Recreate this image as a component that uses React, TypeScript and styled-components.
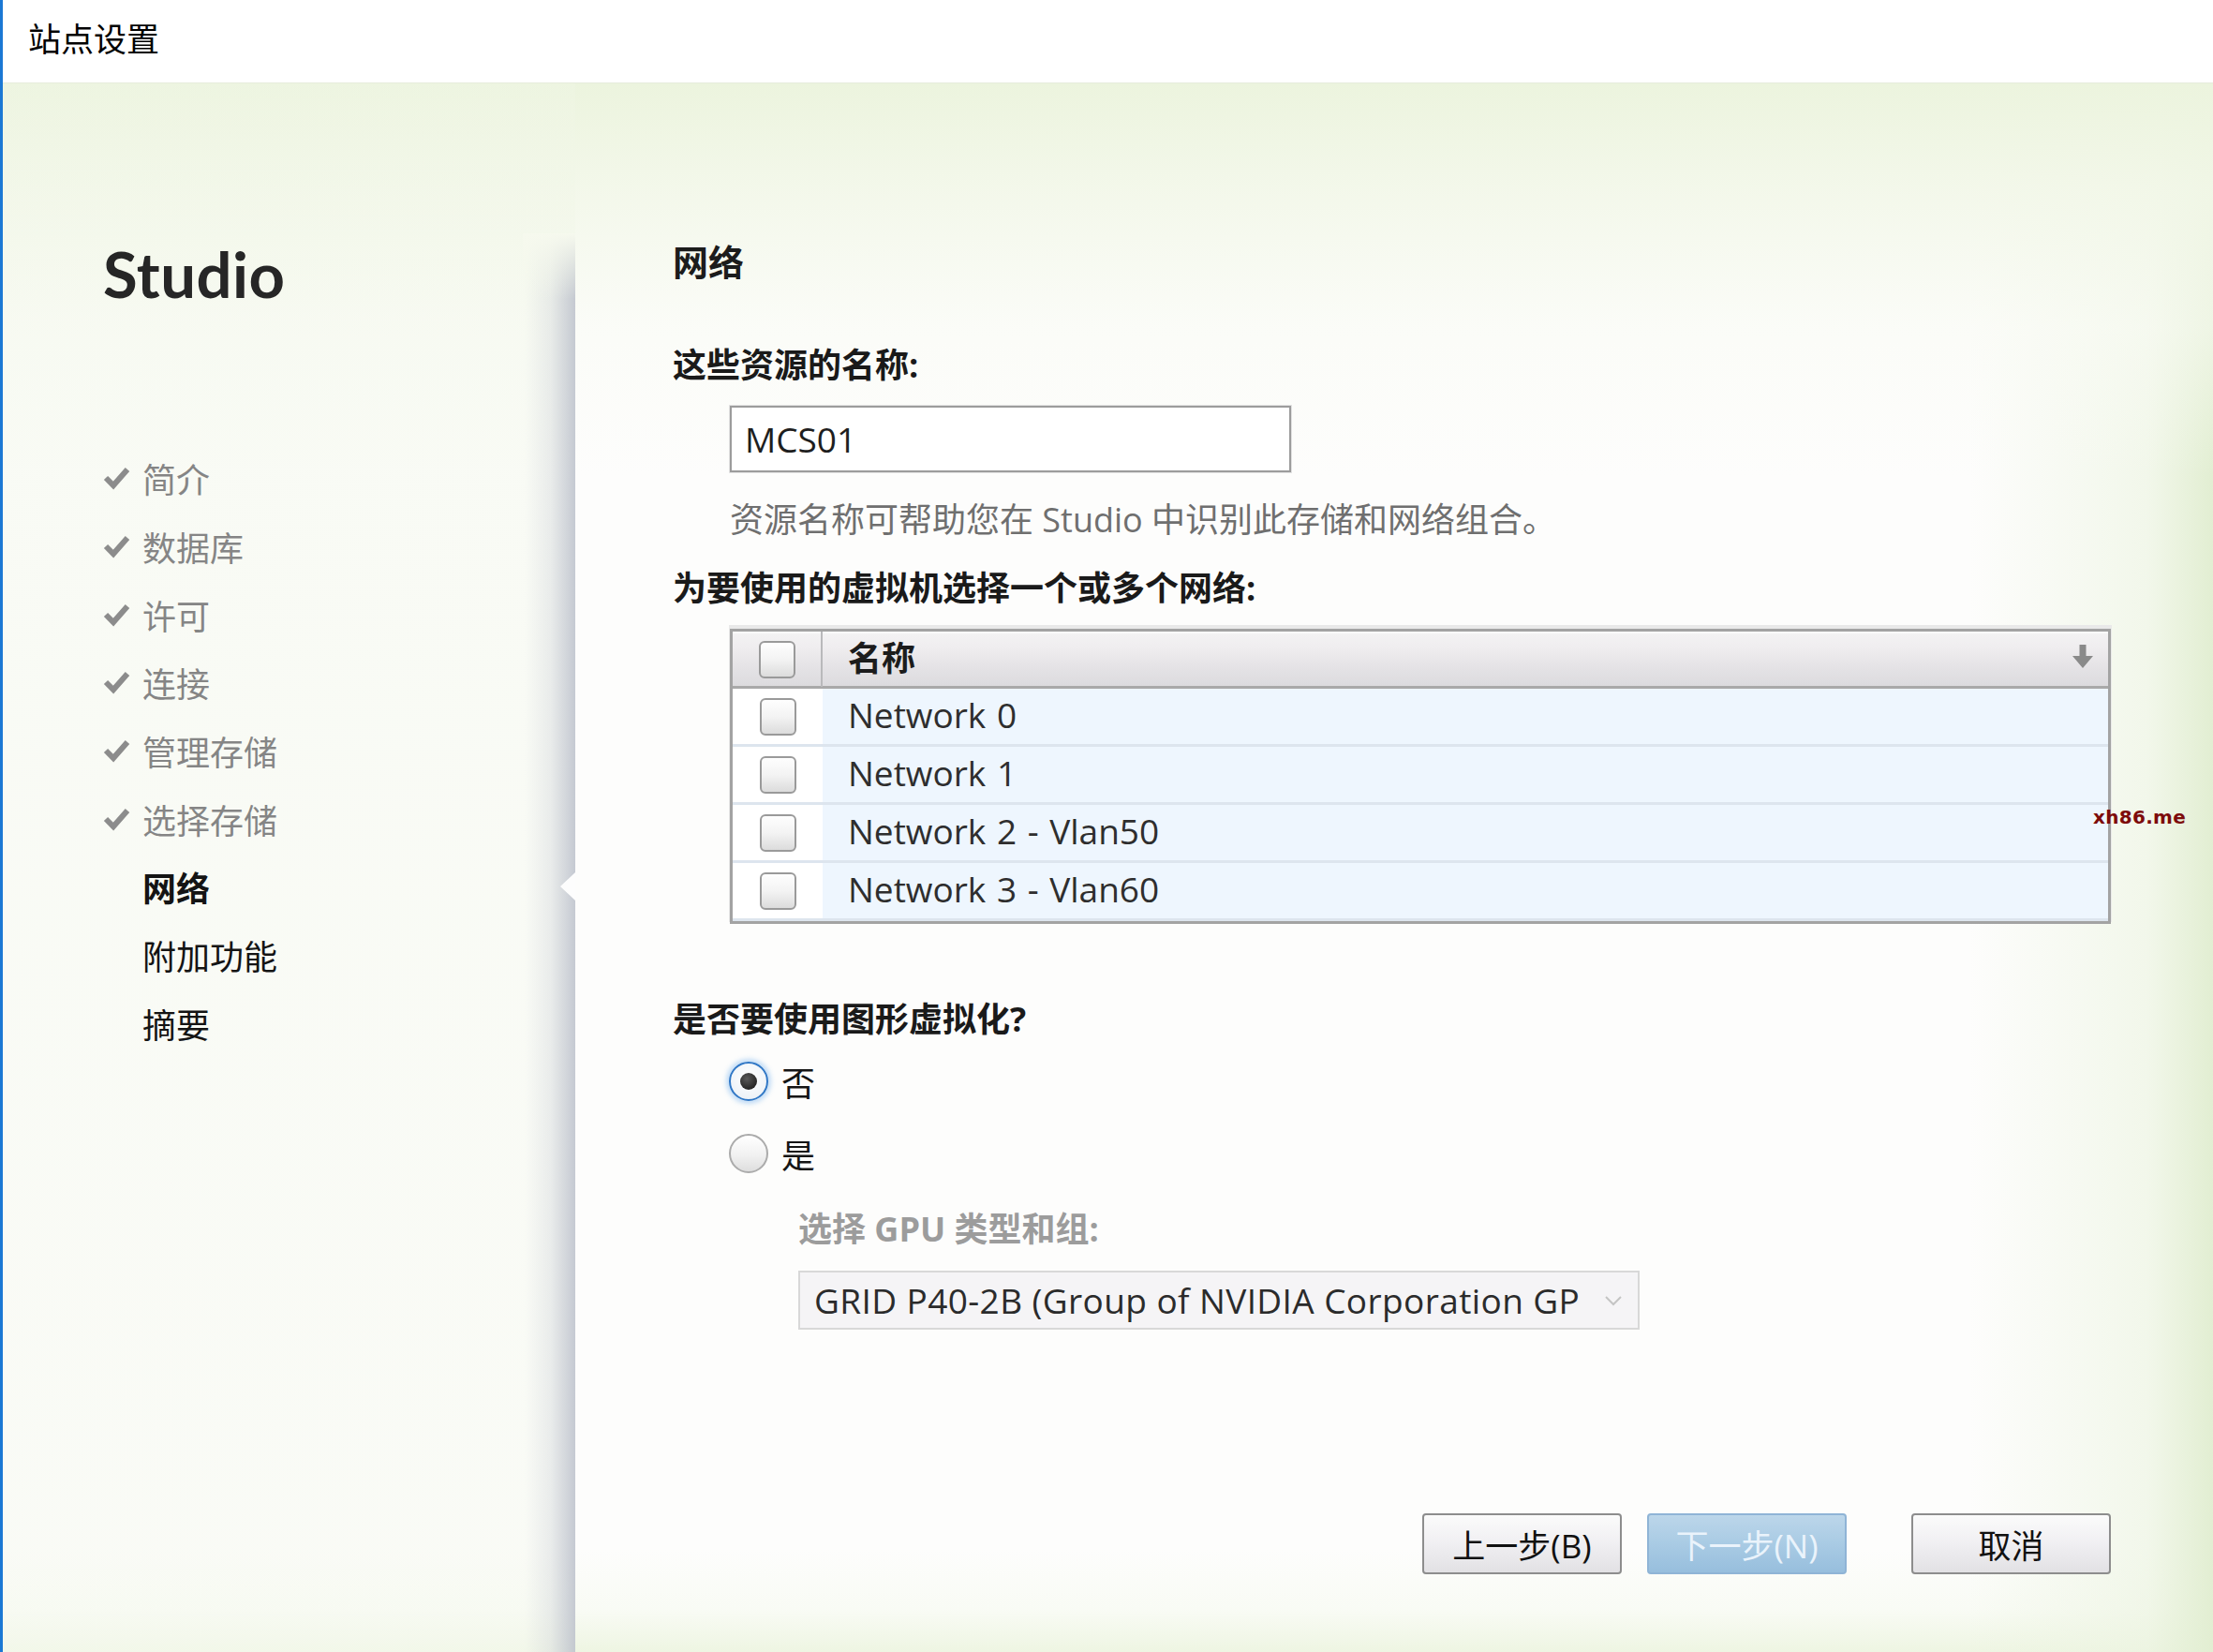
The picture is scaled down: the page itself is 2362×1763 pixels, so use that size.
import React from "react";
import styled, { createGlobalStyle, css } from "styled-components";

const GlobalStyle = createGlobalStyle`
  html, body { margin: 0; padding: 0; background: #ffffff; }
  body { font-family: "Open Sans", "Noto Sans CJK SC", sans-serif; }
  * { box-sizing: border-box; }
`;

const CJK = `"Noto Sans CJK SC", sans-serif`;
const LATIN = `"Open Sans", "Noto Sans CJK SC", sans-serif`;

const Window = styled.div`
  position: relative;
  width: 2362px;
  height: 1763px;
  border-left: 3px solid #1b78d4;
  display: flex;
  flex-direction: column;
  overflow: hidden;
`;

const TitleBar = styled.div`
  height: 88px;
  flex: none;
  background: #ffffff;
  padding: 0 0 10px 27px;
  display: flex;
  align-items: center;
`;

const TitleText = styled.span`
  font-family: ${CJK};
  font-size: 35px;
  color: #000;
  line-height: 1;
`;

const Body = styled.div`
  flex: 1;
  display: flex;
  border-top: 1px solid #e6ecdc;
  background:
    linear-gradient(to bottom, rgba(236,244,222,1) 0, rgba(242,247,232,0.9) 110px, rgba(249,251,244,0.55) 260px, rgba(255,255,255,0) 420px),
    linear-gradient(to left, rgba(226,238,210,1) 0, rgba(236,244,225,0.65) 70px, rgba(255,255,255,0) 260px),
    linear-gradient(to top, rgba(238,245,226,1) 0, rgba(246,250,240,0.6) 45px, rgba(255,255,255,0) 110px),
    #fdfdfc;
`;

const Sidebar = styled.div`
  width: 611px;
  flex: none;
  padding: 163px 0 0 107px;
  background:
    linear-gradient(to bottom, rgba(246,249,238,1) 0, rgba(246,249,238,0) 100%) right 0 top 160px / 56px 70px no-repeat,
    linear-gradient(to right, rgba(196,200,210,0) 0, rgba(196,200,210,0.3) 28px, rgba(184,189,201,0.8) 100%) right bottom / 54px calc(100% - 160px) no-repeat,
    linear-gradient(to bottom, rgba(240,246,230,0.35), rgba(246,249,240,0.5));
`;

const Brand = styled.div`
  font-family: Lato, "Open Sans", sans-serif;
  font-weight: 700;
  font-size: 67px;
  line-height: 80px;
  color: #262626;
  letter-spacing: 0.5px;
`;

const NavList = styled.ul`
  list-style: none;
  margin: 142px 0 0 0;
  padding: 0;
`;

type StepState = "done" | "current" | "todo";

const NavItem = styled.li<{ $state: StepState }>`
  display: flex;
  align-items: center;
  height: 72.7px;
  font-family: ${CJK};
  font-size: 36px;
  color: ${(p) => (p.$state === "done" ? "#858585" : "#141414")};
  font-weight: ${(p) => (p.$state === "current" ? 700 : 400)};
`;

const CheckSlot = styled.span`
  width: 29px;
  height: 26px;
  margin-right: 13px;
  display: inline-flex;
  align-items: center;
`;

const Content = styled.div`
  position: relative;
  flex: 1;
  padding: 164px 0 0 104px;
  display: flex;
  flex-direction: column;
  align-items: flex-start;
`;

const Notch = styled.span`
  position: absolute;
  left: -16px;
  top: 842px;
  width: 0;
  height: 0;
  border-top: 15px solid transparent;
  border-bottom: 15px solid transparent;
  border-right: 16px solid #fdfdfd;
`;

const Heading = styled.h1`
  margin: 0;
  font-family: ${CJK};
  font-size: 38px;
  font-weight: 700;
  line-height: 50px;
  color: #1c1c1c;
`;

const Label = styled.div<{ $mt: number; $indent?: number; $muted?: boolean }>`
  margin-top: ${(p) => p.$mt}px;
  margin-left: ${(p) => p.$indent ?? 0}px;
  font-family: ${LATIN};
  font-size: 36px;
  font-weight: 700;
  line-height: 50px;
  color: ${(p) => (p.$muted ? "#9c9c9c" : "#1a1a1a")};
  white-space: nowrap;
`;

const InputBox = styled.div`
  margin: 18px 0 0 61px;
  width: 599px;
  height: 71px;
  border: 2px solid #9c9c9c;
  box-shadow: 0 0 0 1px #e2e2e2;
  background: #ffffff;
  padding-left: 14px;
  display: flex;
  align-items: center;
  font-family: ${LATIN};
  font-size: 37px;
  color: #1e1e1e;
`;

const Helper = styled.div`
  margin: 26px 0 0 61px;
  font-family: ${LATIN};
  font-size: 36px;
  line-height: 50px;
  color: #6f6f6f;
  white-space: nowrap;
`;

const Table = styled.div`
  margin: 18px 0 0 61px;
  width: 1474px;
  border: 3px solid #a3a3a3;
  box-shadow: 0 -3px 0 1px #e9e9e9;
  background: #ffffff;
`;

const rowGrid = css`
  display: grid;
  grid-template-columns: 96px 1fr;
`;

const HeaderRow = styled.div`
  ${rowGrid};
  height: 61px;
  border-bottom: 3px solid #a9a9a9;
  background: linear-gradient(to bottom, #f4f3f4 0, #efedef 30%, #e6e4e7 60%, #dcdbde 100%);
  box-shadow: inset 0 2px 0 #fbfbfb;
`;

const Row = styled.div`
  ${rowGrid};
  height: 62px;
  border-bottom: 3px solid #dde5ee;
`;

const CheckCell = styled.div<{ $header?: boolean }>`
  display: flex;
  align-items: center;
  justify-content: center;
  background: ${(p) => (p.$header ? "transparent" : "#ffffff")};
  border-right: ${(p) => (p.$header ? "2px solid #b9b9bb" : "none")};
`;

const Checkbox = styled.span`
  width: 39px;
  height: 40px;
  border: 2px solid #9a9a9a;
  border-radius: 6px;
  background: linear-gradient(to bottom, #fefefe 0, #f3f3f3 50%, #dcdcdc 100%);
`;

const NameCell = styled.div<{ $header?: boolean }>`
  display: flex;
  align-items: center;
  padding: 0 16px ${(p) => (p.$header ? 6 : 4)}px 27px;
  background: ${(p) => (p.$header ? "transparent" : "#eef6fe")};
  font-family: ${LATIN};
  font-size: ${(p) => (p.$header ? 36 : 37)}px;
  font-weight: ${(p) => (p.$header ? 700 : 400)};
  color: ${(p) => (p.$header ? "#1c1c1c" : "#2e2e2e")};
  white-space: nowrap;
  word-spacing: 2px;
`;

const SortIcon = styled.svg`
  margin-left: auto;
  flex: none;
`;

const RadioRow = styled.label<{ $mt: number }>`
  margin: ${(p) => p.$mt}px 0 0 60px;
  height: 60px;
  display: flex;
  align-items: center;
  gap: 14px;
  font-family: ${CJK};
  font-size: 36px;
  color: #151515;
`;

const RadioDot = styled.span<{ $checked?: boolean }>`
  position: relative;
  width: 42px;
  height: 42px;
  border-radius: 50%;
  ${(p) =>
    p.$checked
      ? css`
          border: 2px solid #2f77c6;
          background: radial-gradient(circle at 50% 40%, #ffffff 0, #eef3f8 70%, #dfe7ef 100%);
          box-shadow: 0 0 5px 3px rgba(120, 180, 240, 0.45);
          &::after {
            content: "";
            position: absolute;
            left: 50%;
            top: 50%;
            width: 18px;
            height: 18px;
            margin: -9px 0 0 -9px;
            border-radius: 50%;
            background: radial-gradient(circle at 40% 35%, #5a5a5a 0, #262626 70%);
          }
        `
      : css`
          border: 2px solid #ababab;
          background: linear-gradient(to bottom, #ffffff 0, #f1f1f1 55%, #dedede 100%);
        `}
`;

const Select = styled.div`
  margin: 19px 0 0 134px;
  width: 898px;
  height: 63px;
  border: 2px solid #d8d8d8;
  background: #f5f4f6;
  padding: 0 16px 0 15px;
  display: flex;
  align-items: center;
  gap: 20px;
  font-family: ${LATIN};
  font-size: 37px;
  letter-spacing: 0.4px;
  color: #2b2b2b;
`;

const SelectText = styled.span`
  flex: 1;
  min-width: 0;
  overflow: hidden;
  white-space: nowrap;
`;

const ButtonBar = styled.div`
  margin: 196px 0 0 61px;
  width: 1474px;
  display: flex;
  justify-content: flex-end;
`;

const WizardButton = styled.button<{ $primary?: boolean; $gapLeft?: number }>`
  width: 213px;
  height: 65px;
  margin-left: ${(p) => p.$gapLeft ?? 0}px;
  border-radius: 4px;
  font-family: ${LATIN};
  font-size: 35px;
  padding: 0;
  ${(p) =>
    p.$primary
      ? css`
          border: 2px solid #8fb4d6;
          background: linear-gradient(to bottom, #bcd6ea 0, #a9cbe4 50%, #97bedd 100%);
          color: #eaf3fb;
        `
      : css`
          border: 2px solid #8d8d8d;
          background: linear-gradient(to bottom, #fbfbfb 0, #f0eff2 50%, #e2e1e4 100%);
          color: #111111;
        `}
`;

const Watermark = styled.span`
  position: absolute;
  left: 2231px;
  top: 860px;
  font-family: "DejaVu Sans", sans-serif;
  font-weight: 700;
  font-size: 20px;
  color: #7d0b0b;
  letter-spacing: 0.3px;
`;

const CheckMark = () => (
  <svg width="29" height="26" viewBox="0 0 29 26">
    <path d="M3 13 L11 21 L26 4" fill="none" stroke="#8c8c8c" strokeWidth="6" strokeLinejoin="miter" />
  </svg>
);

const steps: { label: string; state: StepState }[] = [
  { label: "简介", state: "done" },
  { label: "数据库", state: "done" },
  { label: "许可", state: "done" },
  { label: "连接", state: "done" },
  { label: "管理存储", state: "done" },
  { label: "选择存储", state: "done" },
  { label: "网络", state: "current" },
  { label: "附加功能", state: "todo" },
  { label: "摘要", state: "todo" },
];

const networks = ["Network 0", "Network 1", "Network 2 - Vlan50", "Network 3 - Vlan60"];

export default function App() {
  return (
    <>
      <GlobalStyle />
      <Window>
        <TitleBar>
          <TitleText>站点设置</TitleText>
        </TitleBar>
        <Body>
          <Sidebar>
            <Brand>Studio</Brand>
            <NavList>
              {steps.map((s) => (
                <NavItem key={s.label} $state={s.state}>
                  <CheckSlot>{s.state === "done" && <CheckMark />}</CheckSlot>
                  {s.label}
                </NavItem>
              ))}
            </NavList>
          </Sidebar>
          <Content>
            <Notch />
            <Heading>网络</Heading>
            <Label $mt={62}>这些资源的名称:</Label>
            <InputBox>MCS01</InputBox>
            <Helper>资源名称可帮助您在 Studio 中识别此存储和网络组合。</Helper>
            <Label $mt={23}>为要使用的虚拟机选择一个或多个网络:</Label>
            <Table>
              <HeaderRow>
                <CheckCell $header>
                  <Checkbox />
                </CheckCell>
                <NameCell $header>
                  名称
                  <SortIcon width="22" height="25" viewBox="0 0 22 25">
                    <path d="M7.5 0 H14.5 V12 H22 L11 25 L0 12 H7.5 Z" fill="#8a8a8a" />
                  </SortIcon>
                </NameCell>
              </HeaderRow>
              {networks.map((n) => (
                <Row key={n}>
                  <CheckCell>
                    <Checkbox />
                  </CheckCell>
                  <NameCell>{n}</NameCell>
                </Row>
              ))}
            </Table>
            <Label $mt={77}>是否要使用图形虚拟化?</Label>
            <RadioRow $mt={11}>
              <RadioDot $checked />
              否
            </RadioRow>
            <RadioRow $mt={17}>
              <RadioDot />
              是
            </RadioRow>
            <Label $mt={26} $indent={134} $muted>
              选择 GPU 类型和组:
            </Label>
            <Select>
              <SelectText>GRID P40-2B (Group of NVIDIA Corporation GP</SelectText>
              <svg width="20" height="14" viewBox="0 0 20 14">
                <path d="M2 3 L10 11 L18 3" fill="none" stroke="#c4c4c4" strokeWidth="2" />
              </svg>
            </Select>
            <ButtonBar>
              <WizardButton>上一步(B)</WizardButton>
              <WizardButton $primary $gapLeft={27}>
                下一步(N)
              </WizardButton>
              <WizardButton $gapLeft={69}>取消</WizardButton>
            </ButtonBar>
          </Content>
        </Body>
        <Watermark>xh86.me</Watermark>
      </Window>
    </>
  );
}
